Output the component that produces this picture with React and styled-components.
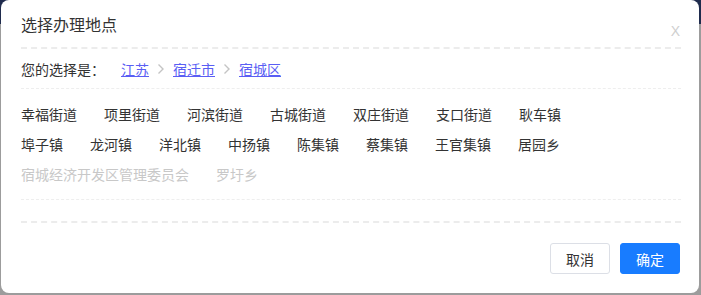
import React from 'react';
import styled, { createGlobalStyle } from 'styled-components';

const GlobalStyle = createGlobalStyle`
	html, body {
		margin: 0;
		padding: 0;
	}
	body {
		background: linear-gradient(#1f2b4d 0, #1f2b4d 24px, #9c9c9c 24px);
		font-family: "Noto Sans CJK SC", "Noto Sans", sans-serif;
		height: 295px;
		overflow: hidden;
	}
`;

const Dialog = styled.div`
	margin-left: 1px;
	width: 698px;
	height: 293px;
	box-sizing: border-box;
	background: #ffffff;
	border-radius: 8px;
	padding: 0 18px 0 20px;
	display: flex;
	flex-direction: column;
`;

const Header = styled.div`
	height: 47px;
	display: flex;
	align-items: center;
	justify-content: space-between;
	border-bottom: 2px dashed #ececec;
`;

const Title = styled.h3`
	margin: 0;
	font-size: 16px;
	font-weight: normal;
	color: #333333;
	line-height: 20px;
`;

const Close = styled.span`
	font-family: "Liberation Sans", Arial, sans-serif;
	font-size: 14px;
	color: #cfcfcf;
	margin-top: 14px;
	margin-right: 1px;
	cursor: pointer;
`;

const Selection = styled.div`
	height: 38px;
	display: flex;
	align-items: center;
	font-size: 14px;
	border-bottom: 1px dashed #eeeeee;
	padding-top: 1px;
`;

const Label = styled.span`
	color: #333333;
	margin-right: 16px;
`;

const Crumb = styled.a`
	color: #5a5ef4;
	text-decoration: underline;
	cursor: pointer;
`;

const Sep = styled.span`
	display: inline-flex;
	margin: 0 8px;
`;

const List = styled.div`
	display: flex;
	flex-wrap: wrap;
	padding: 10px 0;
	border-bottom: 1px dashed #eeeeee;
`;

const Row = styled.div`
	display: flex;
	width: 100%;
`;

const Item = styled.span`
	font-size: 14px;
	line-height: 30px;
	height: 30px;
	margin-right: 27px;
	color: ${(p) => (p.$disabled ? '#c8c8c8' : '#333333')};
	cursor: ${(p) => (p.$disabled ? 'not-allowed' : 'pointer')};
`;

const Footer = styled.div`
	margin-top: 21px;
	border-top: 2px dashed #ececec;
	padding: 20px 1px 0 0;
	display: flex;
	justify-content: flex-end;
	gap: 10px;
`;

const Button = styled.button`
	width: 60px;
	height: 31px;
	border-radius: 3px;
	font-family: inherit;
	font-size: 14px;
	cursor: pointer;
	border: 1px solid ${(p) => (p.$primary ? '#187cff' : '#dcdfe6')};
	background: ${(p) => (p.$primary ? '#187cff' : '#ffffff')};
	color: ${(p) => (p.$primary ? '#ffffff' : '#333333')};
`;

const Chevron = () => (
	<svg width="8" height="12" viewBox="0 0 8 12">
		<path d="M1.5 1.5 L6 6 L1.5 10.5" fill="none" stroke="#c4c4c4" strokeWidth="1.4" />
	</svg>
);

const rows = [
	['幸福街道', '项里街道', '河滨街道', '古城街道', '双庄街道', '支口街道', '耿车镇'],
	['埠子镇', '龙河镇', '洋北镇', '中扬镇', '陈集镇', '蔡集镇', '王官集镇', '居园乡'],
];
const disabledRow = ['宿城经济开发区管理委员会', '罗圩乡'];
const crumbs = ['江苏', '宿迁市', '宿城区'];

export default function App() {
	return (
		<>
			<GlobalStyle />
			<Dialog>
				<Header>
					<Title>选择办理地点</Title>
					<Close>X</Close>
				</Header>
				<Selection>
					<Label>您的选择是：</Label>
					{crumbs.map((c, i) => (
						<React.Fragment key={c}>
							{i > 0 && (
								<Sep>
									<Chevron />
								</Sep>
							)}
							<Crumb>{c}</Crumb>
						</React.Fragment>
					))}
				</Selection>
				<List>
					{rows.map((r, i) => (
						<Row key={i}>
							{r.map((name) => (
								<Item key={name}>{name}</Item>
							))}
						</Row>
					))}
					<Row>
						{disabledRow.map((name) => (
							<Item key={name} $disabled>
								{name}
							</Item>
						))}
					</Row>
				</List>
				<Footer>
					<Button>取消</Button>
					<Button $primary>确定</Button>
				</Footer>
			</Dialog>
		</>
	);
}
